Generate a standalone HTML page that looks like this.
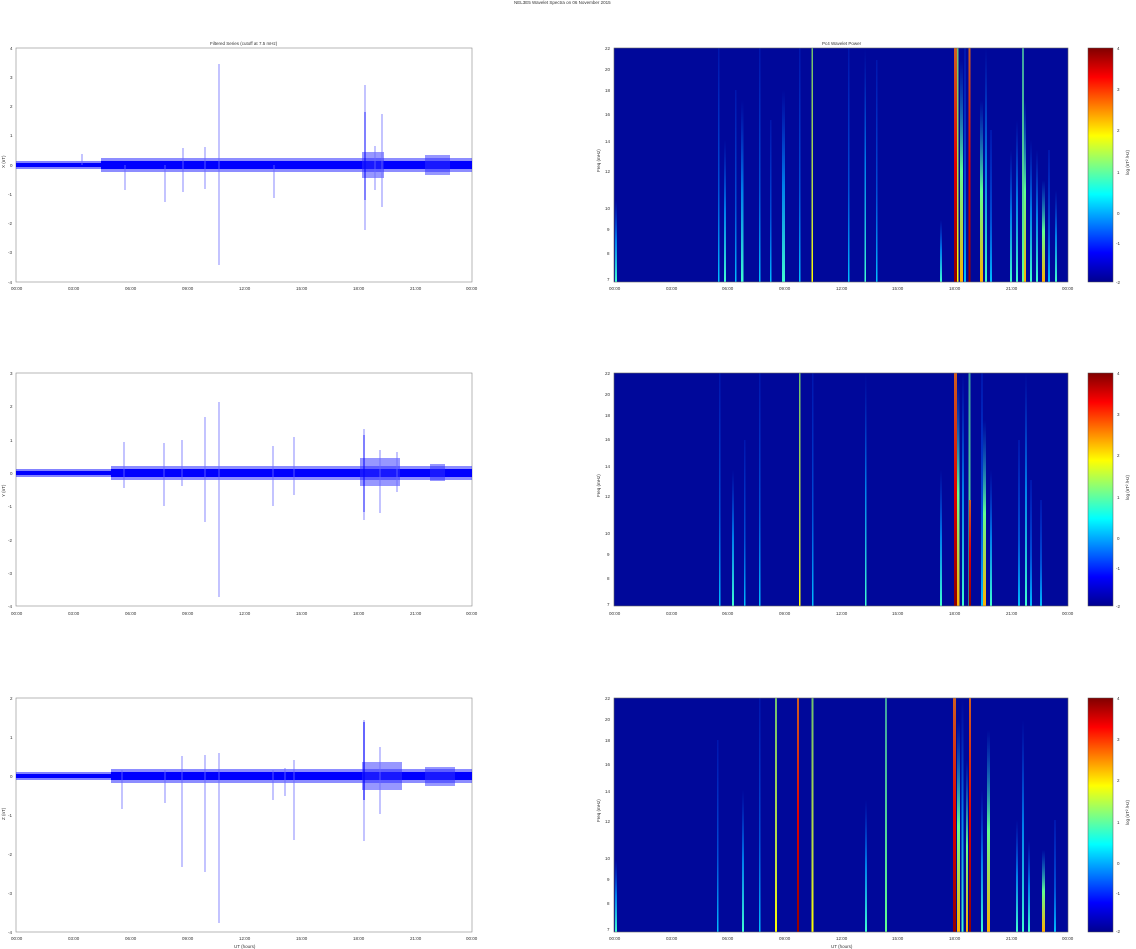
<!DOCTYPE html>
<html><head><meta charset="utf-8"><style>
html,body{margin:0;padding:0;background:#fff;}
svg{display:block;font-family:"Liberation Sans",sans-serif;}
text{font-size:4.5px;fill:#333;}
</style></head><body>
<svg width="1136" height="949" viewBox="0 0 1136 949" xmlns="http://www.w3.org/2000/svg">
<defs>
<linearGradient id="jet" x1="0" y1="0" x2="0" y2="1">
<stop offset="0" stop-color="#800000"/><stop offset=".125" stop-color="#ff0000"/><stop offset=".375" stop-color="#ffff00"/><stop offset=".5" stop-color="#80ff80"/><stop offset=".625" stop-color="#00ffff"/><stop offset=".875" stop-color="#0000ff"/><stop offset="1" stop-color="#00008f"/>
</linearGradient>
<linearGradient id="fc" x1="0" y1="0" x2="0" y2="1"><stop offset="0" stop-color="#0050ff" stop-opacity=".2"/><stop offset=".6" stop-color="#0080ff" stop-opacity=".6"/><stop offset="1" stop-color="#00c0ff"/></linearGradient>
<linearGradient id="cy" x1="0" y1="0" x2="0" y2="1"><stop offset="0" stop-color="#0060ff" stop-opacity="0"/><stop offset=".5" stop-color="#00a0ff" stop-opacity=".8"/><stop offset="1" stop-color="#40ffd0"/></linearGradient>
<linearGradient id="yl" x1="0" y1="0" x2="0" y2="1"><stop offset="0" stop-color="#70c070"/><stop offset=".7" stop-color="#c0e040"/><stop offset="1" stop-color="#ffff00"/></linearGradient>
<linearGradient id="rd" x1="0" y1="0" x2="0" y2="1"><stop offset="0" stop-color="#d06020"/><stop offset=".5" stop-color="#e00000"/><stop offset="1" stop-color="#900000"/></linearGradient>
<linearGradient id="orn" x1="0" y1="0" x2="0" y2="1"><stop offset="0" stop-color="#00a0ff" stop-opacity="0"/><stop offset=".5" stop-color="#60ff90"/><stop offset="1" stop-color="#ffb000"/></linearGradient>
<linearGradient id="gr" x1="0" y1="0" x2="0" y2="1"><stop offset="0" stop-color="#40a0a0"/><stop offset="1" stop-color="#60ff90"/></linearGradient>
</defs>

<text x="514" y="4" style="font-size:4.5px">NEL3E5 Wavelet Spectra on 06 November 2015</text>

<!-- ============ LEFT PANELS ============ -->
<g id="L1">
<text x="210" y="45">Filtered Series (cutoff at 7.5 mHz)</text>
<rect x="16" y="48" width="456" height="234" fill="none" stroke="#888" stroke-width=".6"/>
<g><text x="10" y="50">4</text><text x="10" y="79">3</text><text x="10" y="108">2</text><text x="10" y="137">1</text><text x="10" y="167">0</text><text x="8" y="196">-1</text><text x="8" y="225">-2</text><text x="8" y="254">-3</text><text x="8" y="284">-4</text></g>
<text transform="translate(5,168) rotate(-90)">X (nT)</text>
<rect x="16" y="161" width="85" height="8" fill="#3030ff" opacity=".6"/>
<rect x="16" y="163" width="85" height="4" fill="#0000ff"/>
<rect x="101" y="158" width="371" height="14" fill="#3030ff" opacity=".55"/>
<rect x="101" y="161" width="371" height="8" fill="#0000ff"/>
<rect x="362" y="152" width="22" height="26" fill="#3030ff" opacity=".5"/>
<rect x="425" y="155" width="25" height="20" fill="#3030ff" opacity=".5"/>
<g stroke="#6a6aff" stroke-width=".8">
<line x1="219" y1="64" x2="219" y2="265"/><line x1="365" y1="85" x2="365" y2="230"/><line x1="382" y1="114" x2="382" y2="207"/><line x1="125" y1="165" x2="125" y2="190"/><line x1="165" y1="165" x2="165" y2="202"/><line x1="183" y1="148" x2="183" y2="192"/><line x1="205" y1="147" x2="205" y2="189"/><line x1="274" y1="165" x2="274" y2="198"/><line x1="82" y1="154" x2="82" y2="165"/><line x1="375" y1="146" x2="375" y2="190"/>
</g>
<line x1="365" y1="112" x2="365" y2="200" stroke="#0000ff" stroke-width="1"/>
</g>

<g id="L2">
<rect x="16" y="373" width="456" height="233" fill="none" stroke="#888" stroke-width=".6"/>
<g><text x="10" y="375">3</text><text x="10" y="408">2</text><text x="10" y="442">1</text><text x="10" y="475">0</text><text x="8" y="508">-1</text><text x="8" y="542">-2</text><text x="8" y="575">-3</text><text x="8" y="608">-4</text></g>
<text transform="translate(5,497) rotate(-90)">Y (nT)</text>
<rect x="16" y="469" width="95" height="8" fill="#3030ff" opacity=".6"/>
<rect x="16" y="471" width="95" height="4" fill="#0000ff"/>
<rect x="111" y="466" width="361" height="14" fill="#3030ff" opacity=".55"/>
<rect x="111" y="469" width="361" height="8" fill="#0000ff"/>
<rect x="360" y="458" width="40" height="28" fill="#3030ff" opacity=".5"/>
<rect x="430" y="464" width="15" height="17" fill="#3030ff" opacity=".5"/>
<g stroke="#6a6aff" stroke-width=".8">
<line x1="219" y1="402" x2="219" y2="597"/><line x1="205" y1="417" x2="205" y2="522"/><line x1="182" y1="440" x2="182" y2="486"/><line x1="164" y1="443" x2="164" y2="506"/><line x1="124" y1="442" x2="124" y2="488"/><line x1="273" y1="446" x2="273" y2="506"/><line x1="294" y1="437" x2="294" y2="495"/><line x1="364" y1="429" x2="364" y2="520"/><line x1="380" y1="450" x2="380" y2="513"/><line x1="397" y1="452" x2="397" y2="492"/>
</g>
<line x1="364" y1="435" x2="364" y2="512" stroke="#0000ff" stroke-width="1"/>
</g>

<g id="L3">
<rect x="16" y="698" width="456" height="234" fill="none" stroke="#888" stroke-width=".6"/>
<g><text x="10" y="700">2</text><text x="10" y="739">1</text><text x="10" y="778">0</text><text x="8" y="817">-1</text><text x="8" y="856">-2</text><text x="8" y="895">-3</text><text x="8" y="934">-4</text></g>
<text transform="translate(5,820) rotate(-90)">Z (nT)</text>
<rect x="16" y="772" width="95" height="8" fill="#3030ff" opacity=".6"/>
<rect x="16" y="774" width="95" height="4" fill="#0000ff"/>
<rect x="111" y="769" width="361" height="14" fill="#3030ff" opacity=".55"/>
<rect x="111" y="772" width="361" height="8" fill="#0000ff"/>
<rect x="362" y="762" width="40" height="28" fill="#3030ff" opacity=".5"/>
<rect x="425" y="767" width="30" height="19" fill="#3030ff" opacity=".5"/>
<g stroke="#6a6aff" stroke-width=".8">
<line x1="182" y1="756" x2="182" y2="867"/><line x1="205" y1="755" x2="205" y2="872"/><line x1="219" y1="753" x2="219" y2="923"/><line x1="294" y1="760" x2="294" y2="840"/><line x1="364" y1="720" x2="364" y2="841"/><line x1="380" y1="747" x2="380" y2="814"/><line x1="122" y1="770" x2="122" y2="809"/><line x1="165" y1="770" x2="165" y2="803"/><line x1="273" y1="770" x2="273" y2="800"/><line x1="285" y1="768" x2="285" y2="796"/>
</g>
<line x1="364" y1="722" x2="364" y2="800" stroke="#0000ff" stroke-width="1.2"/>
<text x="234" y="948">UT (hours)</text>
</g>

<g>
<text x="11" y="290">00:00</text><text x="68" y="290">03:00</text><text x="125" y="290">06:00</text><text x="182" y="290">09:00</text><text x="239" y="290">12:00</text><text x="296" y="290">15:00</text><text x="353" y="290">18:00</text><text x="410" y="290">21:00</text><text x="466" y="290">00:00</text>
<text x="11" y="615">00:00</text><text x="68" y="615">03:00</text><text x="125" y="615">06:00</text><text x="182" y="615">09:00</text><text x="239" y="615">12:00</text><text x="296" y="615">15:00</text><text x="353" y="615">18:00</text><text x="410" y="615">21:00</text><text x="466" y="615">00:00</text>
<text x="11" y="940">00:00</text><text x="68" y="940">03:00</text><text x="125" y="940">06:00</text><text x="182" y="940">09:00</text><text x="239" y="940">12:00</text><text x="296" y="940">15:00</text><text x="353" y="940">18:00</text><text x="410" y="940">21:00</text><text x="466" y="940">00:00</text>
</g>

<!-- ============ RIGHT PANELS ============ -->
<g id="R1">
<text x="822" y="45">Pc4 Wavelet Power</text>
<rect x="614" y="48" width="454" height="234" fill="#00008f"/>
<rect x="614" y="48" width="454" height="234" fill="#0018b0" opacity=".35"/>
<rect x="615" y="200" width="2" height="82" fill="url(#cy)"/>
<rect x="718" y="48" width="1.5" height="234" fill="url(#fc)"/>
<rect x="724" y="140" width="2" height="142" fill="url(#cy)"/>
<rect x="735" y="90" width="1.5" height="192" fill="url(#fc)"/>
<rect x="741" y="100" width="2.5" height="182" fill="url(#cy)"/>
<rect x="759" y="48" width="1.5" height="234" fill="url(#fc)"/>
<rect x="770" y="120" width="1.5" height="162" fill="url(#fc)"/>
<rect x="782" y="90" width="3" height="192" fill="url(#cy)"/>
<rect x="799" y="48" width="1.5" height="234" fill="url(#fc)"/>
<rect x="811.5" y="48" width="1.5" height="234" fill="url(#yl)"/>
<rect x="848" y="48" width="1.5" height="234" fill="url(#fc)"/>
<rect x="864.5" y="48" width="1.5" height="234" fill="url(#cy)"/>
<rect x="876" y="60" width="1.5" height="222" fill="url(#fc)"/>
<rect x="940" y="220" width="2" height="62" fill="url(#cy)"/>
<rect x="954" y="48" width="3" height="234" fill="url(#rd)"/>
<rect x="957" y="48" width="1.5" height="234" fill="url(#yl)"/>
<rect x="960" y="60" width="3" height="222" fill="url(#orn)"/>
<rect x="964" y="48" width="2" height="234" fill="url(#fc)"/>
<rect x="968.5" y="48" width="2" height="234" fill="url(#rd)"/>
<rect x="980" y="100" width="3" height="182" fill="url(#orn)"/>
<rect x="985" y="48" width="2" height="234" fill="url(#cy)"/>
<rect x="990" y="130" width="2" height="152" fill="url(#fc)"/>
<rect x="1010" y="150" width="2" height="132" fill="url(#cy)"/>
<rect x="1016" y="120" width="2" height="162" fill="url(#cy)"/>
<rect x="1022" y="48" width="2" height="234" fill="url(#gr)"/>
<rect x="1024" y="100" width="2" height="182" fill="url(#orn)"/>
<rect x="1030" y="140" width="2" height="142" fill="url(#cy)"/>
<rect x="1036" y="150" width="2" height="132" fill="url(#cy)"/>
<rect x="1042" y="180" width="3" height="102" fill="url(#orn)"/>
<rect x="1048" y="150" width="2" height="132" fill="url(#fc)"/>
<rect x="1055" y="190" width="2" height="92" fill="url(#cy)"/>
<rect x="614" y="48" width="454" height="234" fill="none" stroke="#666" stroke-width=".6"/>
<g><text x="605" y="50">22</text><text x="605" y="71">20</text><text x="605" y="92">18</text><text x="605" y="116">16</text><text x="605" y="143">14</text><text x="605" y="173">12</text><text x="605" y="210">10</text><text x="607" y="231">9</text><text x="607" y="255">8</text><text x="607" y="281">7</text></g>
<text transform="translate(600,172) rotate(-90)">Freq (mHz)</text>
<rect x="1088" y="48" width="25" height="234" fill="url(#jet)" stroke="#555" stroke-width=".5"/>
<g><text x="1117" y="50">4</text><text x="1117" y="91">3</text><text x="1117" y="132">2</text><text x="1117" y="174">1</text><text x="1117" y="215">0</text><text x="1116" y="245">-1</text><text x="1116" y="284">-2</text></g>
<text transform="translate(1129,175) rotate(-90)">log (nT² /Hz)</text>
</g>

<g id="R2">
<rect x="614" y="373" width="454" height="233" fill="#00008f"/>
<rect x="614" y="373" width="454" height="233" fill="#0018b0" opacity=".35"/>
<rect x="719" y="373" width="1.5" height="233" fill="url(#fc)"/>
<rect x="732" y="470" width="2" height="136" fill="url(#cy)"/>
<rect x="744" y="440" width="1.5" height="166" fill="url(#fc)"/>
<rect x="759" y="373" width="1.5" height="233" fill="url(#fc)"/>
<rect x="799" y="373" width="1.5" height="233" fill="url(#yl)"/>
<rect x="812" y="373" width="1.5" height="233" fill="url(#fc)"/>
<rect x="865" y="373" width="1.5" height="233" fill="url(#cy)"/>
<rect x="940" y="470" width="2" height="136" fill="url(#cy)"/>
<rect x="954" y="373" width="3" height="233" fill="url(#rd)"/>
<rect x="957" y="380" width="2.5" height="226" fill="url(#orn)"/>
<rect x="962" y="373" width="2" height="233" fill="url(#cy)"/>
<rect x="968.5" y="373" width="2" height="233" fill="url(#gr)"/>
<rect x="969" y="500" width="2" height="106" fill="url(#rd)"/>
<rect x="981" y="373" width="2" height="233" fill="url(#fc)"/>
<rect x="983" y="420" width="3" height="186" fill="url(#orn)"/>
<rect x="990" y="470" width="2" height="136" fill="url(#cy)"/>
<rect x="1018" y="440" width="2" height="166" fill="url(#fc)"/>
<rect x="1025" y="373" width="2" height="233" fill="url(#cy)"/>
<rect x="1030" y="480" width="2" height="126" fill="url(#fc)"/>
<rect x="1040" y="500" width="2" height="106" fill="url(#fc)"/>
<rect x="614" y="373" width="454" height="233" fill="none" stroke="#666" stroke-width=".6"/>
<g><text x="605" y="375">22</text><text x="605" y="396">20</text><text x="605" y="417">18</text><text x="605" y="441">16</text><text x="605" y="468">14</text><text x="605" y="498">12</text><text x="605" y="535">10</text><text x="607" y="556">9</text><text x="607" y="580">8</text><text x="607" y="606">7</text></g>
<text transform="translate(600,497) rotate(-90)">Freq (mHz)</text>
<rect x="1088" y="373" width="25" height="233" fill="url(#jet)" stroke="#555" stroke-width=".5"/>
<g><text x="1117" y="375">4</text><text x="1117" y="416">3</text><text x="1117" y="457">2</text><text x="1117" y="499">1</text><text x="1117" y="540">0</text><text x="1116" y="570">-1</text><text x="1116" y="608">-2</text></g>
<text transform="translate(1129,500) rotate(-90)">log (nT² /Hz)</text>
</g>

<g id="R3">
<rect x="614" y="698" width="454" height="234" fill="#00008f"/>
<rect x="614" y="698" width="454" height="234" fill="#0018b0" opacity=".35"/>
<rect x="615" y="860" width="2" height="72" fill="url(#cy)"/>
<rect x="717" y="740" width="1.5" height="192" fill="url(#fc)"/>
<rect x="742" y="790" width="2" height="142" fill="url(#cy)"/>
<rect x="759" y="698" width="1.5" height="234" fill="url(#fc)"/>
<rect x="775" y="698" width="2" height="234" fill="url(#yl)"/>
<rect x="797" y="698" width="2" height="234" fill="url(#rd)"/>
<rect x="811.5" y="698" width="2" height="234" fill="url(#yl)"/>
<rect x="865" y="800" width="2" height="132" fill="url(#cy)"/>
<rect x="885" y="698" width="2" height="234" fill="url(#gr)"/>
<rect x="953" y="698" width="3" height="234" fill="url(#rd)"/>
<rect x="957" y="720" width="3" height="212" fill="url(#orn)"/>
<rect x="961.5" y="698" width="2" height="234" fill="url(#cy)"/>
<rect x="969" y="698" width="2" height="234" fill="url(#rd)"/>
<rect x="966" y="760" width="2" height="172" fill="url(#orn)"/>
<rect x="981" y="790" width="2" height="142" fill="url(#cy)"/>
<rect x="987" y="730" width="3" height="202" fill="url(#orn)"/>
<rect x="1016" y="820" width="2" height="112" fill="url(#cy)"/>
<rect x="1022" y="720" width="2" height="212" fill="url(#cy)"/>
<rect x="1028" y="840" width="2" height="92" fill="url(#cy)"/>
<rect x="1042" y="850" width="3" height="82" fill="url(#orn)"/>
<rect x="1054" y="820" width="2" height="112" fill="url(#fc)"/>
<rect x="614" y="698" width="454" height="234" fill="none" stroke="#666" stroke-width=".6"/>
<g><text x="605" y="700">22</text><text x="605" y="721">20</text><text x="605" y="742">18</text><text x="605" y="766">16</text><text x="605" y="793">14</text><text x="605" y="823">12</text><text x="605" y="860">10</text><text x="607" y="881">9</text><text x="607" y="905">8</text><text x="607" y="931">7</text></g>
<text transform="translate(600,822) rotate(-90)">Freq (mHz)</text>
<rect x="1088" y="698" width="25" height="234" fill="url(#jet)" stroke="#555" stroke-width=".5"/>
<g><text x="1117" y="700">4</text><text x="1117" y="741">3</text><text x="1117" y="782">2</text><text x="1117" y="824">1</text><text x="1117" y="865">0</text><text x="1116" y="895">-1</text><text x="1116" y="933">-2</text></g>
<text transform="translate(1129,825) rotate(-90)">log (nT² /Hz)</text>
<text x="831" y="948">UT (hours)</text>
</g>

<g>
<text x="609" y="290">00:00</text><text x="666" y="290">03:00</text><text x="722" y="290">06:00</text><text x="779" y="290">09:00</text><text x="836" y="290">12:00</text><text x="892" y="290">15:00</text><text x="949" y="290">18:00</text><text x="1006" y="290">21:00</text><text x="1062" y="290">00:00</text>
<text x="609" y="615">00:00</text><text x="666" y="615">03:00</text><text x="722" y="615">06:00</text><text x="779" y="615">09:00</text><text x="836" y="615">12:00</text><text x="892" y="615">15:00</text><text x="949" y="615">18:00</text><text x="1006" y="615">21:00</text><text x="1062" y="615">00:00</text>
<text x="609" y="940">00:00</text><text x="666" y="940">03:00</text><text x="722" y="940">06:00</text><text x="779" y="940">09:00</text><text x="836" y="940">12:00</text><text x="892" y="940">15:00</text><text x="949" y="940">18:00</text><text x="1006" y="940">21:00</text><text x="1062" y="940">00:00</text>
</g>
</svg>
</body></html>
